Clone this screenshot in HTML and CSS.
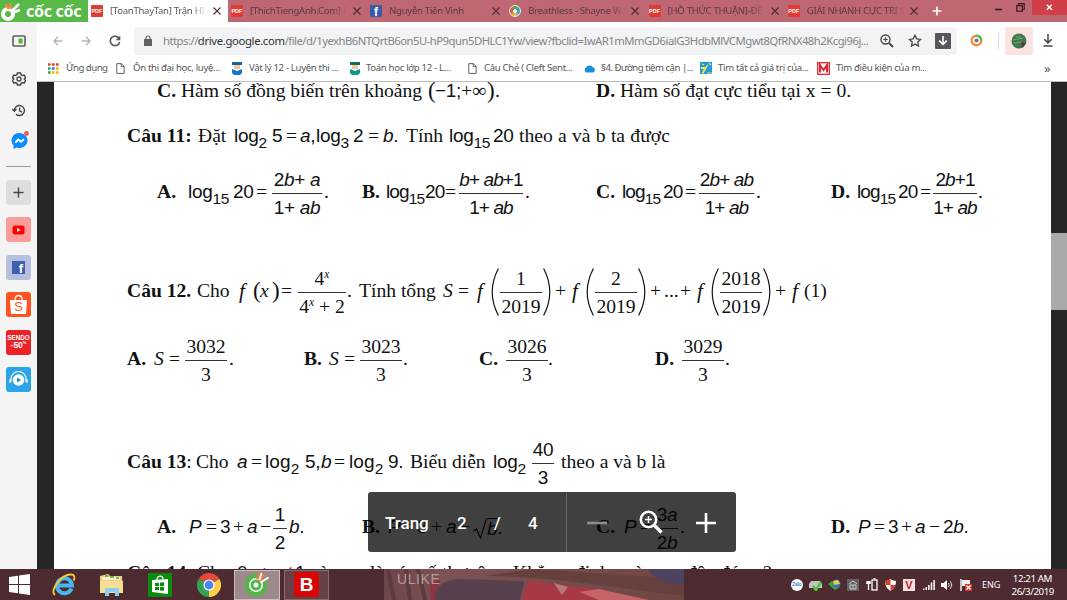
FILE: index.html
```html
<!DOCTYPE html>
<html lang="vi">
<head>
<meta charset="utf-8">
<title>[ToanThayTan] Trận HI</title>
<link rel="stylesheet" href="styles.css">
</head>
<body>
<svg class="defs" width="0" height="0">
  <symbol id="x" viewBox="0 0 8 8"><path d="M.5.5l7 7M7.5.5l-7 7" fill="none" stroke="#4a3035" stroke-width="1.1"/></symbol>
  <symbol id="page" viewBox="0 0 9 11"><path d="M.8.6h4.6L8.2 3.4v7H.8zM5.2.8v2.8h2.9" fill="none" stroke="#5f6368"/></symbol>
  <symbol id="pl" viewBox="0 0 8 48"><path d="M7.4.5Q-5 24 7.4 47.5" fill="none" stroke="#111" stroke-width="1.2"/></symbol>
  <symbol id="pr" viewBox="0 0 8 48"><path d="M.6.5Q13 24 .6 47.5" fill="none" stroke="#111" stroke-width="1.2"/></symbol>
</svg>
<div class="screen">
  <header class="tabs">
    <div class="brand">
      <svg width="24" height="22" viewBox="0 0 24 22"><circle cx="8" cy="14" r="5" fill="none" stroke="#fff" stroke-width="4"/><path d="M10 3l1 6M5 4l4 5" stroke="#f7893b" stroke-width="2.4"/><path d="M19 4l-8 8M20 10l-8 3" stroke="#fff" stroke-width="2.6"/></svg>
      <span>cốc cốc</span>
    </div>
    <div class="tab active"><i class="pdf">PDF</i><span>[ToanThayTan] Trận HI</span><svg width="8" height="8"><use href="#x"/></svg></div>
    <div class="tab"><i class="pdf">PDF</i><span>[ThichTiengAnh.Com] E</span><svg width="8" height="8"><use href="#x"/></svg></div>
    <div class="tab"><i class="fb">f</i><span>Nguyễn Tiến Vinh</span><svg width="8" height="8"><use href="#x"/></svg></div>
    <div class="tab"><i class="disc"></i><span>Breathless - Shayne Wa</span><svg width="8" height="8"><use href="#x"/></svg></div>
    <div class="tab"><i class="pdf">PDF</i><span>[HỒ THỨC THUẬN]-ĐỀ</span><svg width="8" height="8"><use href="#x"/></svg></div>
    <div class="tab"><i class="pdf">PDF</i><span>GIẢI NHANH CỰC TRỊ S</span><svg width="8" height="8"><use href="#x"/></svg></div>
    <svg class="newtab" width="10" height="10"><path d="M5 .5v9M.5 5h9" stroke="#fff" stroke-width="1.6"/></svg>
    <svg class="min" width="7" height="3"><path d="M0 1.5h7" stroke="#222" stroke-width="1.6"/></svg>
    <svg class="restore" width="9" height="9"><path d="M.8 2.6h5.5v5.5H.8zM2.6 2.5V.7h5.6v5.6H6.4" fill="none" stroke="#3a1c22" stroke-width="1.2"/></svg>
    <div class="close"><svg width="7" height="7"><path d="M.8.8l5 5M5.8.8l-5 5" stroke="#fff" stroke-width="1.5"/></svg></div>
  </header>

  <div class="middle">
    <aside class="side">
      <svg class="s1" width="14" height="12"><rect x="1" y="1" width="12" height="10" rx="1" fill="none" stroke="#5a5d61" stroke-width="1.6"/><path d="M6.5 3.5h4v5h-4z" fill="#53b830"/></svg>
      <svg class="s2" width="14" height="14" viewBox="0 0 14 14"><path d="M5.4 1h3.2l.5 1.8 1.2.7 1.8-.5 1.5 2.6-1.3 1.4L13.6 8.600l-1.500 2.500-1.900-.5-1.100.7L8.600 13H5.400l-.5-1.700-1.200-.7-1.800.5L.4 8.500 1.700 7 .4 5.600 1.900 3l1.800.5 1.200-.7z" fill="none" stroke="#444" stroke-width="1.4"/><circle cx="7" cy="7" r="2" fill="none" stroke="#444" stroke-width="1.3"/></svg>
      <svg class="s3" width="14" height="13" viewBox="0 0 14 13"><path d="M2.4 6.500A5 5 0 1 1 4 10.200M.3 5l2.100 2.200L4.500 5M7.600 3.500v3.300l2.400 1.300" fill="none" stroke="#444" stroke-width="1.4"/></svg>
      <svg class="s4" width="18" height="19" viewBox="0 0 18 19"><path d="M8.500 2a8 7.500 0 1 1-2.800 14.500L2.500 18v-3.500A7.500 7.500 0 0 1 8.500 2z" fill="#0a8bff"/><path d="M4.300 11.500l3-3 2.600 2.200L13 8.200" fill="none" stroke="#fff" stroke-width="1.9"/><circle cx="15.500" cy="2.500" r="2.400" fill="#fa5252"/></svg>
      <hr>
      <div class="tile plus"><svg width="11" height="11"><path d="M5.500.5v10M.5 5.500h10" stroke="#444" stroke-width="1.4"/></svg></div>
      <div class="tile yt"><svg width="13" height="10"><rect x=".5" y=".5" width="12" height="9" rx="2.500" fill="#f00"/><path d="M5.200 3v4l3.300-2z" fill="#fff"/></svg></div>
      <div class="tile face"><i>f</i></div>
      <div class="tile shop"><svg width="19" height="21" viewBox="0 0 19 21"><path d="M1 6h17l-1 14H2z" fill="#fff"/><path d="M6 6c0-6 7-6 7 0" fill="none" stroke="#fff" stroke-width="1.300"/><text x="9.500" y="17" text-anchor="middle">S</text></svg></div>
      <div class="tile sendo"><b>SENDO</b><b class="big">-50<sup>%</sup></b></div>
      <div class="tile music"><svg width="19" height="19" viewBox="0 0 19 19"><circle cx="9.500" cy="10" r="5.800" fill="#fff"/><path d="M2 12V9a7.500 7.500 0 0 1 15 0v3M1 9v4M18 9v4" fill="none" stroke="#fff" stroke-width="1.100"/><path d="M8 7.500v5l4-2.500z" fill="#168fd6"/></svg></div>
    </aside>

    <main class="browser">
      <nav class="toolbar">
        <svg width="10" height="10"><path d="M9.500 5H1M5 .8L.9 5 5 9.200" fill="none" stroke="#b1b4b7" stroke-width="1.300"/></svg>
        <svg width="10" height="10"><path d="M.5 5H9M5 .8L9.100 5 5 9.200" fill="none" stroke="#b1b4b7" stroke-width="1.300"/></svg>
        <svg width="12" height="12" viewBox="0 0 12 12"><path d="M10.300 4A4.700 4.700 0 1 0 10.600 7" fill="none" stroke="#55585c" stroke-width="1.600"/><path d="M11.300.5v4.700H6.600z" fill="#55585c"/></svg>
        <div class="url">
          <svg width="8" height="11"><path d="M0 4h8v7H0z" fill="#5f6368"/><path d="M2 4.500V3a2 2 0 0 1 4 0v1.500" fill="none" stroke="#5f6368" stroke-width="1.200"/></svg>
          <span class="addr">https://<b>drive.google.com</b>/file/d/1yexhB6NTQrtB6on5U-hP9qun5DHLC1Yw/view?fbclid=IwAR1mMmGD6ialG3HdbMlVCMgwt8QfRNX48h2Kcgi96j...</span>
          <svg width="14" height="14" viewBox="0 0 14 14"><circle cx="5.500" cy="5.500" r="4.500" fill="none" stroke="#44474b" stroke-width="1.400"/><path d="M9 9l4 4" stroke="#44474b" stroke-width="2"/><path d="M5.500 3.300v4.400M3.300 5.500h4.400" stroke="#44474b" stroke-width="1.200"/></svg>
          <svg width="14" height="13" viewBox="0 0 14 13"><path d="M7 1.300l1.700 3.600 4 .5-2.900 2.700.7 3.900L7 10.100 3.500 12l.7-3.900L1.300 5.400l4-.5z" fill="none" stroke="#44474b" stroke-width="1.300"/></svg>
          <svg width="16" height="16"><rect width="16" height="16" rx="1" fill="#55595e"/><path d="M8 3v8M4.200 7.600L8 11.400l3.800-3.800" fill="none" stroke="#fff" stroke-width="1.600"/></svg>
        </div>
        <svg width="13" height="13"><circle cx="6.500" cy="6.500" r="4.800" fill="none" stroke="#f58a3c" stroke-width="2.400"/><path d="M6.500 1.700a4.800 4.800 0 0 1 4.800 4.800" fill="none" stroke="#4cc05c" stroke-width="2.400"/><circle cx="6.500" cy="6.500" r="2.100" fill="#777"/></svg>
        <i class="vr"></i>
        <div class="avatar"><svg width="16" height="16"><circle cx="8" cy="8" r="7.500" fill="#3e7a4c"/><path d="M2 7l10-2M3 10l8-1M5 4l5 0" stroke="#76a27a"/><path d="M10 9l5 1-4 5z" fill="#543c3c"/></svg></div>
        <svg width="10" height="13"><path d="M5 0v8.500M1.300 5.200L5 8.900l3.700-3.700M.5 12h9" fill="none" stroke="#44474b" stroke-width="1.500"/></svg>
      </nav>
      <nav class="marks">
        <svg width="11" height="11"><path d="M0 1.500h11" stroke="#e33b2e" stroke-width="2.600" stroke-dasharray="2.600 1.400"/><path d="M0 5.500h2.600" stroke="#2fa84f" stroke-width="2.600"/><path d="M4 5.500h2.600" stroke="#3b78e7" stroke-width="2.600"/><path d="M8 5.500h2.600" stroke="#fbb400" stroke-width="2.600"/><path d="M0 9.500h2.600" stroke="#2fa84f" stroke-width="2.600"/><path d="M4 9.500h7" stroke="#fbb400" stroke-width="2.600" stroke-dasharray="2.600 1.400"/></svg>
        <span>Ứng dụng</span>
        <svg width="9" height="11"><use href="#page"/></svg><span>Ôn thi đại học, luyệ...</span>
        <svg width="10" height="13"><path d="M0 0h10v3H0z" fill="#1a5f9e"/><path d="M2 3h6v4H2z" fill="#f0c9a2"/><path d="M0 7l5 2 5-2v4l-2 2H2l-2-2z" fill="#1577c9"/></svg><span>Vật lý 12 - Luyện thi ...</span>
        <svg width="10" height="13"><path d="M0 0h10v3H0z" fill="#176b62"/><path d="M2 3h6v4H2z" fill="#f0c9a2"/><path d="M0 7l5 2 5-2v4l-2 2H2l-2-2z" fill="#12988a"/></svg><span>Toán học lớp 12 - L...</span>
        <svg width="9" height="11"><use href="#page"/></svg><span>Câu Chẻ ( Cleft Sent...</span>
        <svg width="13" height="9"><path d="M3 8.500a3 3 0 0 1 0-5A4 4 0 0 1 9.500 3a3 3 0 0 1 1 5.500z" fill="#1490df"/></svg><span class="narrow">§4. Đường tiệm cận |...</span>
        <svg width="12" height="12"><path d="M0 0h12v12H0z" fill="#1f9bdc"/><path d="M1 6h4.500l-3 5.500" fill="none" stroke="#f4e542" stroke-width="2"/><path d="M7 11h5M6 5l2-2M2 2l2 1M9 1l2 2" fill="none" stroke="#e9e45a" stroke-width="1.200"/></svg><span>Tìm tất cả giá trị của...</span>
        <svg width="13" height="13"><rect x=".7" y=".7" width="11.600" height="11.600" fill="#fff" stroke="#e3262d" stroke-width="1.300"/><path d="M3 10.500V3l3.500 5L10 3v7.500" fill="none" stroke="#e3262d" stroke-width="2"/></svg><span>Tìm điều kiện của m...</span>
        <span class="more">»</span>
      </nav>

      <section class="viewer">
        <article class="doc">
          <div class="row r0"><span><b>C.</b> Hàm số đồng biến trên khoảng</span><span class="par">(</span><span class="m">−1;</span><span>+∞</span><span class="par">)</span><span>.</span><span class="last"><b>D.</b> Hàm số đạt cực tiểu tại x = 0.</span></div>

          <div class="row r1"><b>Câu 11:</b><span>Đặt</span><span class="m">log<sub>2</sub></span><span class="m">5</span><span>=</span><span class="m"><i>a</i>,</span><span class="m">log<sub>3</sub></span><span class="m">2</span><span>=</span><span class="m"><i>b</i>.</span><span>Tính</span><span class="m">log<sub>15</sub></span><span class="m">20</span><span class="wide">theo a và b ta được</span></div>

          <div class="row r2">
            <b>A.</b><span class="m">log<sub>15</sub></span><span class="m">20</span><span>=</span><div class="frac m w50"><span>2<i>b</i>+<i> a</i></span><span>1+<i> ab</i></span></div><span>.</span>
            <b>B.</b><span class="m tight">log<sub>15</sub></span><span class="m tight">20</span><span>=</span><div class="frac m w64 tight"><span><i>b</i>+<i> ab</i>+1</span><span>1+<i> ab</i></span></div><span>.</span>
            <b>C.</b><span class="m tight">log<sub>15</sub></span><span class="m tight">20</span><span>=</span><div class="frac m w55 tight"><span>2<i>b</i>+<i> ab</i></span><span>1+<i> ab</i></span></div><span>.</span>
            <b>D.</b><span class="m tight">log<sub>15</sub></span><span class="m tight">20</span><span>=</span><div class="frac m w43 tight"><span>2<i>b</i>+1</span><span>1+<i> ab</i></span></div><span>.</span>
          </div>

          <div class="row r3">
            <b>Câu 12.</b><span>Cho</span><i class="fn">f</i><span class="par">(</span><i>x</i><span class="par">)</span><span>=</span><div class="frac w47"><span>4<sup>x</sup></span><span>4<sup>x</sup> + 2</span></div><span>.</span><span>Tính tổng</span><i>S</i><span>=</span>
            <i class="fn">f</i><svg width="8" height="48"><use href="#pl"/></svg><div class="frac w42"><span>1</span><span>2019</span></div><svg width="8" height="48"><use href="#pr"/></svg><span>+</span>
            <i class="fn">f</i><svg width="8" height="48"><use href="#pl"/></svg><div class="frac w42"><span>2</span><span>2019</span></div><svg width="8" height="48"><use href="#pr"/></svg><span>+</span><span>...</span><span>+</span>
            <i class="fn">f</i><svg width="8" height="48"><use href="#pl"/></svg><div class="frac w42"><span>2018</span><span>2019</span></div><svg width="8" height="48"><use href="#pr"/></svg><span>+</span><i class="fn">f</i><span>(1)</span>
          </div>

          <div class="row r4">
            <b>A.</b><i>S</i><span>=</span><div class="frac w42"><span>3032</span><span>3</span></div><span>.</span>
            <b>B.</b><i>S</i><span>=</span><div class="frac w42"><span>3023</span><span>3</span></div><span>.</span>
            <b>C.</b><div class="frac w42"><span>3026</span><span>3</span></div><span>.</span>
            <b>D.</b><div class="frac w42"><span>3029</span><span>3</span></div><span>.</span>
          </div>

          <div class="row r5"><span><b>Câu 13</b>:</span><span>Cho</span><i class="m">a</i><span>=</span><span class="m loose">log<sub>2</sub></span><span class="m">5,</span><i class="m">b</i><span>=</span><span class="m loose">log<sub>2</sub></span><span class="m">9.</span><span>Biểu diễn</span><span class="m">log<sub>2</sub></span><div class="frac m w22"><span>40</span><span>3</span></div><span>theo a và b là</span></div>

          <div class="row r6">
            <b>A.</b><i class="m">P</i><span>=</span><span class="m">3</span><span>+</span><i class="m">a</i><span>−</span><div class="frac m w14"><span>1</span><span>2</span></div><span class="m"><i>b</i>.</span>
            <b>B.</b><i class="m">P</i><span>=</span><span class="m">3</span><span>+</span><i class="m">a</i><span>−</span><div class="root"><svg width="14" height="21"><path d="M.5 13l3-2 4 9L13.500.6" fill="none" stroke="#111" stroke-width="1.200"/></svg><span class="m rad"><i>b</i></span><span class="m">.</span></div>
            <b>C.</b><i class="m">P</i><span>=</span><div class="frac m w22"><span>3<i>a</i></span><span>2<i>b</i></span></div><span>.</span>
            <b>D.</b><i class="m">P</i><span>=</span><span class="m">3</span><span>+</span><i class="m">a</i><span>−</span><span class="m">2<i>b</i>.</span>
          </div>

          <div class="row r7"><b>Câu 14.</b><span>Cho</span><span class="m">0</span><span>&lt;</span><i class="m">a</i><span>≠</span><span class="m">1</span><span>và</span><i>x, y</i><span>là</span><span>các</span><span>số</span><span>thực</span><span>âm.</span><span>Khẳng</span><span>định</span><span>nào</span><span>sau</span><span>đây</span><span>đúng</span><span>?</span></div>
        </article>
        <div class="scroll"><i></i></div>
        <div class="pager">
          <span class="lbl">Trang</span><span>2</span><span>/</span><span>4</span>
          <div class="zoom">
            <svg width="20" height="4"><path d="M0 2h20" stroke="#8c8c8c" stroke-width="2.600"/></svg>
            <svg width="25" height="25" viewBox="0 0 25 25"><circle cx="9.500" cy="9.500" r="7.700" fill="none" stroke="#fff" stroke-width="2.600"/><path d="M15 15l7.500 7.500" stroke="#fff" stroke-width="3.400"/><path d="M9.500 6v7M6 9.500h7" stroke="#fff" stroke-width="1.500"/></svg>
            <svg width="20" height="20"><path d="M10 0v20M0 10h20" stroke="#fff" stroke-width="2.600"/></svg>
          </div>
        </div>
      </section>
    </main>
  </div>

  <footer class="task">
    <svg class="win" width="21" height="21" viewBox="0 0 21 21"><path d="M0 3l9-1.300v8.300H0zM10 1.500L21 0v10H10zM0 11h9v8.300L0 18zM10 11h11v10l-11-1.500z" fill="#fff"/></svg>
    <svg class="ie" width="24" height="24" viewBox="0 0 24 24"><path d="M19.500 15.500A7.500 7.500 0 1 1 20 12.500H7" fill="none" stroke="#49b8ee" stroke-width="4"/><path d="M3 22C-3 18 9 2 18 1.500c5-.3 5 3 3.500 6" fill="none" stroke="#f6c636" stroke-width="1.900"/></svg>
    <svg class="folder" width="25" height="24" viewBox="0 0 25 24"><path d="M1 3l8-2 2 2h12l1 17H1z" fill="#ecd27c"/><path d="M3 4h18v3H3z" fill="#fff5c9"/><path d="M6 3h3M11 4h4M17 5h3" stroke="#4ba34b" stroke-width="1.500"/><path d="M1 8h23v12H1z" fill="#f5df96"/><path d="M6 23v-8h14v8h-4v-4h-6v4z" fill="#8fcdec"/></svg>
    <svg class="store" width="24" height="24" viewBox="0 0 24 24"><path d="M0 0h24v24H0z" fill="#078c0e"/><path d="M4 7l16-1v15L4 19z" fill="#fff"/><path d="M9 7c0-5 6-5 6-1" fill="none" stroke="#fff" stroke-width="1.400"/><path d="M7 10l4-.3V13H7zM12 9.600l4-.3V13h-4zM7 14h4v3.300L7 17zM12 14h4v3.800l-4-.4z" fill="#078c0e"/></svg>
    <svg class="chrome" width="24" height="24" viewBox="0 0 24 24"><path d="M12 12L1.600 6A12 12 0 0 1 22.400 6z" fill="#e0493b"/><path d="M12 12L22.400 6A12 12 0 0 1 12 24z" fill="#fcd04b"/><path d="M12 12v12A12 12 0 0 1 1.600 6z" fill="#35a255"/><circle cx="12" cy="12" r="5.600" fill="#fff"/><circle cx="12" cy="12" r="4.400" fill="#4a88ee"/></svg>
    <div class="app on"><svg width="26" height="25" viewBox="0 0 26 25"><circle cx="12" cy="13" r="11.500" fill="#54b548"/><path d="M13 11L15 0h11v8z" fill="#9d888b"/><circle cx="12" cy="13" r="7" fill="#fff"/><circle cx="12" cy="13" r="4" fill="none" stroke="#54b548" stroke-width="3"/><path d="M14.500 1.500l-1 6M20 2l-4 7" stroke="#f47b3b" stroke-width="2.400"/><path d="M17.500 1l-2 7M24.500 5.500l-8 5" stroke="#fff" stroke-width="1.800"/></svg></div>
    <div class="app"><i class="bkav">B</i></div>
    <div class="photo">
      <svg width="300" height="31" viewBox="0 0 300 31"><defs><linearGradient id="wood" x1="0" x2="1"><stop offset="0" stop-color="#6d464a"/><stop offset=".2" stop-color="#7c5253"/><stop offset="1" stop-color="#704642"/></linearGradient></defs><path d="M0 0h300v31H0z" fill="url(#wood)"/><path d="M4 0l6 31M22 0l4 31M34 0l7 31" stroke="#5c3a3d" stroke-width="4"/><path d="M46 14l10-3-5 20h-4z" fill="#8d3442"/><path d="M51 31c0-14 6-18 22-21l67 2-4 19z" fill="#57414f"/><path d="M138 31l6-19 60 7 45 12z" fill="#a83845"/><path d="M170 14l14 4-6 8z" fill="#b7797c"/><path d="M215 31l-20-8 20-3 50 11z" fill="#c56368"/><path d="M100 7c60 0 120 10 200 20v-17L150 0z" fill="#65403d"/><path d="M264 0h36v15c-16 1-30-4-36-15z" fill="#4e435e"/></svg>
      <span>ULIKE</span>
    </div>
    <div class="tray">
      <i class="zalo">Zalo</i>
      <svg width="13" height="12" viewBox="0 0 13 12"><path d="M2 2h9l2 3v4H0V5z" fill="#bfc3c3"/><path d="M4 7l3 4 5-8" fill="none" stroke="#50c836" stroke-width="2.400"/></svg>
      <svg width="13" height="12" viewBox="0 0 13 12"><path d="M0 5l4-3 8 6-5 3z" fill="#3aa83a"/><circle cx="8.500" cy="4.500" r="4" fill="#3370ba"/><path d="M5 2l5-1 2 4-6 1z" fill="#eccd3f"/></svg>
      <svg width="12" height="12" viewBox="0 0 12 12"><path d="M0 0h12v12H0z" fill="#636262"/><path d="M2 5l4-3 4 3M3 6h6v4H3zM6 6v4" fill="none" stroke="#ccc"/></svg>
      <svg width="12" height="13" viewBox="0 0 12 13"><rect x="6" y="2" width="5" height="10" fill="none" stroke="#fff" stroke-width="1.300"/><path d="M7.500.7h2M2.500 3v9" stroke="#fff" stroke-width="1.300"/><path d="M.3 3h4.400v3H.3z" fill="#fff"/></svg>
      <svg width="11" height="12" viewBox="0 0 11 12"><path d="M0 2q3 0 5.500-2Q8 2 11 2q0 7-5.500 10Q0 9 0 2z" fill="#fff"/><path d="M0 2q3 0 5.500-2v6H.8zM5.500 6h4.800q-1 4-4.800 6z" fill="#d83a2c"/></svg>
      <i class="vkey">V</i>
      <svg width="12" height="10" viewBox="0 0 12 10"><path d="M.7 10V8.500M3.300 10V7M5.900 10V5M8.500 10V2.500M11.100 10V0" stroke="#fff" stroke-width="1.500"/></svg>
      <svg width="12" height="12" viewBox="0 0 12 12"><path d="M0 4h2.500L6 1v10L2.500 8H0z" fill="#fff"/><path d="M7.500 4q1.500 2 0 4M9.300 2.200q3 3.800 0 7.600" fill="none" stroke="#ddd"/></svg>
      <svg width="12" height="12" viewBox="0 0 12 12"><path d="M1 0v12" stroke="#fff" stroke-width="1.400"/><path d="M2 1h8v6H2z" fill="#eee"/><path d="M5 5h7v7H5z" fill="#d8342c"/><path d="M6.500 6.500l4 4M10.500 6.500l-4 4" stroke="#fff" stroke-width="1.200"/></svg>
    </div>
    <span class="lang">ENG</span>
    <div class="clock"><span>12:21 AM</span><span class="date">26/3/2019</span></div>
  </footer>
</div>
</body>
</html>
```
FILE: styles.css
```css
* { box-sizing: border-box; }
body { margin: 0; font-family: "Noto Sans", "Open Sans", sans-serif; }
svg { display: block; flex: none; }
.defs { position: absolute; }
.screen { width: 1067px; height: 600px; display: flex; flex-direction: column; overflow: hidden; background: #f3f3f3; }

/* tab strip */
.tabs { height: 22px; flex: none; display: flex; align-items: center; background: #be6672; }
.brand { width: 88px; height: 22px; display: flex; align-items: center; background: #58b848; color: #fff; overflow: hidden; }
.brand span { font: 700 16px/22px "Noto Sans", sans-serif; white-space: nowrap; margin-left: 2px; letter-spacing: -.3px; }
.tab { width: 139.300px; height: 22px; display: flex; align-items: center; padding-left: 3px; color: #5a3a40; }
.tab.active { background: #fff; width: 140px; color: #5a5a5a; }
.tab span { width: 97px; margin-left: 7px; margin-right: 6px; overflow: hidden; white-space: nowrap; font-size: 9.600px; line-height: 20px; letter-spacing: -.3px; -webkit-mask-image: linear-gradient(90deg, #000 84%, transparent 100%); mask-image: linear-gradient(90deg, #000 84%, transparent 100%); }
.tab i { width: 12px; height: 12px; flex: none; font-style: normal; color: #fff; }
.pdf { background: #e03a32; border-radius: 1px; font: 700 5.500px/12px "Liberation Sans", sans-serif; text-align: center; }
.tab .fb { background: #3b5ba5; font: 700 12px/14px "Liberation Sans", sans-serif; text-align: center; border-radius: 1px; overflow: hidden; }
.disc { border-radius: 50%; background: radial-gradient(circle, #fff 25%, transparent 28%), conic-gradient(#4caf50, #25a5d5 30%, #f1c83c 50%, #e94b3c 75%, #4caf50); border: 1px solid #eee; }
.newtab { margin-left: 8px; }
.min { margin: -3px 0 0 53px; }
.restore { margin: -8px 7px 0 14px; }
.close { width: 35px; height: 15px; align-self: flex-start; background: #d03f48; display: flex; align-items: center; justify-content: center; }

.middle { height: 547px; flex: none; display: flex; }

/* left rail */
.side { width: 37px; display: flex; flex-direction: column; align-items: center; background: #f4f4f5; }
.s1 { margin-top: 13px; }
.s2 { margin-top: 25px; }
.s3 { margin-top: 18px; }
.s4 { margin-top: 14px; margin-left: 3px; }
.side hr { width: 25px; height: 1px; border: 0; background: #999; margin: 16px 0 12.500px; flex: none; }
.tile { width: 25px; height: 25px; flex: none; border-radius: 3px; margin-bottom: 12.500px; display: flex; flex-direction: column; align-items: center; justify-content: center; overflow: hidden; }
.plus { background: #dedfdb; }
.yt { background: #fb9b9b; }
.face { background: #b5c1df; }
.face i { width: 13px; height: 13px; background: #3f5fae; color: #fff; font: 700 13px/15px "Liberation Sans", sans-serif; text-align: right; padding-right: 2px; overflow: hidden; }
.shop { background: #ff5421; }
.shop text { font: 13px "Liberation Sans", sans-serif; fill: #ff5421; }
.sendo { background: #ec2027; color: #fff; font: 6.300px/7px "Liberation Sans", sans-serif; }
.sendo .big { font-size: 8.500px; line-height: 9px; }
.sendo sup { font-size: 4px; vertical-align: 4px; line-height: 0; }
.music { background: #2ba5e8; }

/* toolbar */
.browser { width: 1030px; display: flex; flex-direction: column; }
.toolbar { height: 38px; flex: none; background: #fff; display: grid; align-items: center; padding-left: 16px; padding-bottom: 1px; grid-template-columns: 28px 28px 25px 836px 28px 7px 38px auto; }
.url { width: 823px; height: 28px; background: #f1f3f4; border-radius: 3px; display: grid; align-items: center; padding-left: 10px; grid-template-columns: 19px 717px 28px 27px auto; }
.addr { font-size: 11.300px; letter-spacing: -.51px; color: #80868b; white-space: nowrap; }
.addr b { font-weight: 400; color: #303134; letter-spacing: -.35px; }
.vr { width: 1px; height: 16px; background: #d5d7d9; }
.avatar { width: 28px; height: 28px; border-radius: 3px; background: #fbe3e2; display: flex; align-items: center; justify-content: center; }

.marks { height: 22px; flex: none; background: #fff; border-bottom: 1px solid #bdbdbd; display: grid; align-items: center; padding: 0 0 5px 11px; color: #55565a; grid-template-columns: 18px 50px 17px 99px 17px 101px 16px 102px 16px 99px 18px 99px 18px 99px 19px 208px auto; }
.marks span { font-size: 9.600px; line-height: 14px; white-space: nowrap; letter-spacing: -.33px; }
.marks span:nth-child(2) { letter-spacing: -.5px; }
.marks .narrow { letter-spacing: -.5px; }
.marks .more { font-size: 13px; }

/* document */
.viewer { flex: 1; min-height: 0; display: flex; position: relative; background: #262626; padding-left: 17px; overflow: hidden; }
.doc { width: 997px; flex: none; background: #fff; overflow: hidden; padding-left: 73px; color: #111; font: 19.600px/22px "Liberation Serif", serif; }
.row { display: grid; align-items: center; height: 50px; white-space: nowrap; }
.row > span, .row > b, .row > i { padding-bottom: 3px; }
.row sub { font-size: 15.500px; line-height: 0; vertical-align: -5.500px; }
.row sup { font-size: 11.500px; line-height: 0; vertical-align: 7px; font-style: italic; }
.m { font-family: "Liberation Sans", sans-serif; font-size: 19px; letter-spacing: -.3px; }
.tight { letter-spacing: -.9px; }
.loose { letter-spacing: .1px; }
.wide { word-spacing: .4px; }
.row .par { font-size: 23px; }
.row .fn { font-size: 21px; padding-left: 3px; }
.frac { display: flex; flex-direction: column; align-items: center; margin-top: 1px; line-height: 22px; }
.frac span { white-space: pre; }
.frac span:first-child { width: 100%; text-align: center; padding-bottom: 2px; border-bottom: 1px solid #333; }
.frac span:last-child { padding-top: 3px; }
.w14 { width: 14px; }
.w22 { width: 22px; }
.w42 { width: 42px; }
.w43 { width: 44px; }
.w47 { width: 48px; }
.w50 { width: 50px; }
.w55 { width: 55px; }
.w64 { width: 64px; }
.r0 { height: 18px; margin-top: -2px; padding-left: 30px; grid-template-columns: 271px 7px 26px 26px 8px 101px auto; }
.r0 > span { padding-bottom: 0; }
.r1 { height: 40px; margin-top: 19px; grid-template-columns: 71px 36px 38px 14px 14px 16px 37px 15px 15px 23px 43px 44px 26px auto; }
.r2 { margin-top: 11px; padding-left: 30px; grid-template-columns: 31px 45px 23px 16px 52px 38px 24px 39px 20px 14px 66px 71px 26px 41px 22px 14px 57px 75px 26px 41px 22px 13px 45px auto; }
.r3 { height: 60px; margin-top: 44px; grid-template-columns: 70px 39px 17px 7px 12px 9px 17px 49px 12px 84px 15px 16px 17px 9px 43px 12px 14px 17px 9px 43px 12px 14px 16px 14px 17px 9px 43px 12px 14px 15px auto; }
.r4 { margin-top: 13px; grid-template-columns: 27px 15px 16px 44px 75px 25px 15px 16px 43px 76px 27px 42px 107px 27px 43px auto; }
.r5 { margin-top: 53px; grid-template-columns: 69px 41px 14px 14px 40px 16px 13px 15px 39px 22px 83px 39px 29px auto; }
.r6 { margin-top: 15px; padding-left: 30px; grid-template-columns: 32px 17px 14px 13px 14px 13px 13px 16px 73px 26px 15px 14px 14px 15px 13px 14px 123px 28px 16px 16px 24px 151px 27px 16px 14px 13px 14px 14px 14px auto; }
.r7 { height: 24px; margin-top: 9px; grid-template-columns: 70px 40px 18px 14px 13px 13px 15px 25px 35px 19px 30px 23px 35px 36px 62px 50px 33px 29px 33px 43px auto; }
.root { display: flex; align-items: center; padding-bottom: 1px; }
.root .rad { border-top: 1px solid #111; height: 21px; line-height: 20px; }

.scroll { width: 16px; padding-top: 151px; }
.scroll i { display: block; height: 77px; background: #a9a9a9; }

.pager { position: absolute; left: 331px; top: 410px; width: 368px; height: 60px; border-radius: 3px; background: rgba(0, 0, 0, .75); color: #fff; display: grid; align-items: center; grid-template-columns: 72px 37px 34px 38px auto; padding-left: 17px; padding-top: 1px; font: 500 17px/24px Roboto, sans-serif; }
.zoom { height: 59px; border-left: 1px solid #666; display: grid; grid-template-columns: 52px 57px auto; align-items: center; padding-left: 20px; }

/* taskbar */
.task { height: 31px; flex: none; background: #4d2b31; display: flex; align-items: center; color: #fff; }
.win { margin-left: 9px; }
.ie { margin-left: 22px; }
.folder { margin-left: 23px; }
.store { margin-left: 24px; }
.chrome { margin-left: 25px; }
.app { width: 45px; height: 30px; margin-left: 4px; border: 1px solid #8a6c70; background: #654248; display: flex; align-items: center; justify-content: center; }
.app.on { margin-left: 13px; background: #9d888b; border-color: #cbbfc1; width: 46px; }
.bkav { width: 25px; height: 25px; border-radius: 3px; background: #d90606; font: 700 19px/25px "Liberation Sans", sans-serif; text-align: center; }
.photo { width: 300px; height: 31px; margin-left: 55px; position: relative; overflow: hidden; }
.photo span { position: absolute; left: 13px; top: 1px; font: 14px/18px "Liberation Sans", sans-serif; letter-spacing: .6px; color: #b49a9b; }
.tray { display: grid; align-items: center; margin-left: 107px; grid-template-columns: 18px 19px 19px 19px 19px 18px 20px 18px 19px 13px; }
.zalo { width: 12px; height: 12px; border-radius: 50%; background: #fff; color: #1b77d8; font: 700 4.500px/12px "Liberation Sans", sans-serif; text-align: center; }
.vkey { width: 12px; height: 12px; background: #f7dfe0; color: #c31c27; font: 700 11px/12px "Liberation Sans", sans-serif; text-align: center; }
.lang { margin-left: 9px; width: 28px; font-size: 9px; }
.clock { width: 44px; display: flex; flex-direction: column; align-items: flex-end; font-size: 9.800px; line-height: 13px; letter-spacing: -.45px; white-space: nowrap; }
.clock span { margin-right: 2px; }
.clock .date { margin-right: 0; }
```
